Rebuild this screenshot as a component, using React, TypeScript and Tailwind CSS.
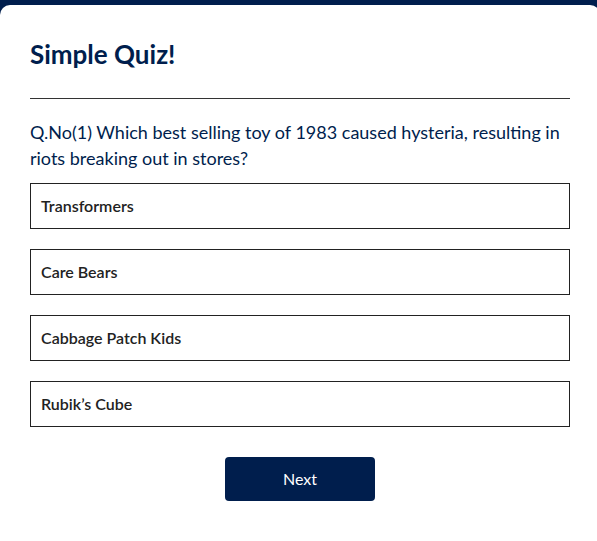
const answers = ['Transformers', 'Care Bears', 'Cabbage Patch Kids', 'Rubik’s Cube'];

export default function App() {
  return (
    <div className="min-h-screen overflow-hidden bg-[#001e4d] pt-[5px] font-['Lato',sans-serif]">
      <div className="min-h-[536px] w-[600px] rounded-[10px] bg-white p-[30px]">
        <h1 className="border-b border-[#333] pb-[25px] text-[26px] font-bold leading-[38px] text-[#001e4d]">
          Simple Quiz!
        </h1>

        <div className="py-[20px]">
          <h2 className="text-[18px] font-normal leading-[26px] text-[#001e4d]">
            Q.No(1) Which best selling toy of 1983 caused hysteria, resulting in riots breaking out in stores?
          </h2>

          <div className="mt-[12px] flex flex-col gap-[20px]">
            {answers.map((a) => (
              <button
                key={a}
                className="w-full border border-[#222] bg-white px-[10px] py-[10px] text-left text-[16px] font-semibold leading-[24px] text-[#222]"
              >
                {a}
              </button>
            ))}
          </div>

          <button className="mx-auto mt-[30px] block w-[150px] rounded-[4px] bg-[#001e4d] p-[10px] text-[16px] font-normal leading-[24px] text-white">
            Next
          </button>
        </div>
      </div>
    </div>
  );
}
